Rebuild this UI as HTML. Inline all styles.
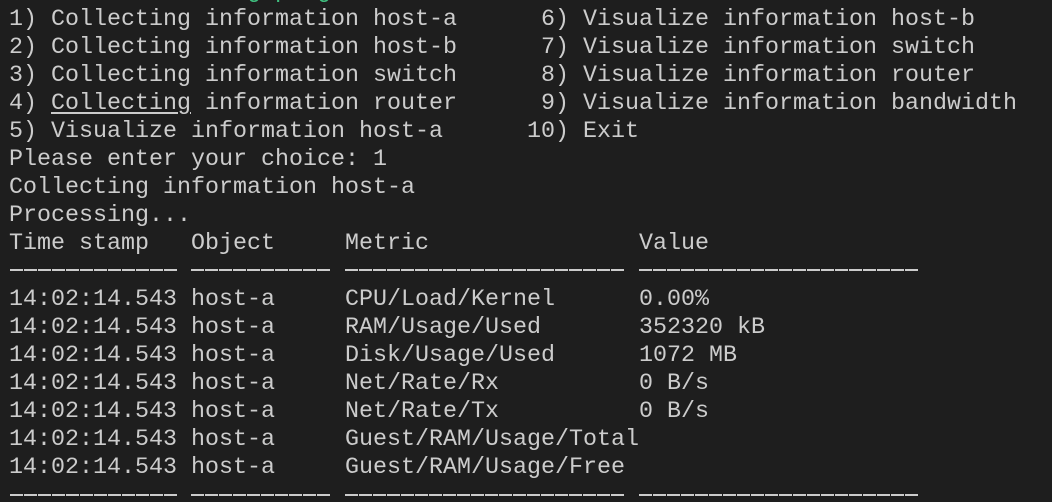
<!DOCTYPE html>
<html><head><meta charset="utf-8"><style>
html,body{margin:0;padding:0;background:#1e1e1e;width:1052px;height:502px;overflow:hidden}
pre{position:absolute;left:9px;top:6px;margin:0;font-family:"Liberation Mono","DejaVu Sans Mono",monospace;font-size:23.33px;line-height:28px;color:#cccccc;white-space:pre}
.u{text-decoration:underline;text-underline-offset:3px}
.d{position:absolute;height:2px;background:repeating-linear-gradient(90deg,#cccccc 0 13px,transparent 13px 14px)}
.g{position:absolute;top:-22px;left:9px;font-family:"Liberation Mono",monospace;font-size:23.33px;line-height:28px;color:#3fbf7f;white-space:pre}
</style></head><body>
<div class="g">                 g p  g</div>
<pre>1) Collecting information host-a      6) Visualize information host-b
2) Collecting information host-b      7) Visualize information switch
3) Collecting information switch      8) Visualize information router
4) <span class="u">Collecting</span> information router      9) Visualize information bandwidth
5) Visualize information host-a      10) Exit
Please enter your choice: 1
Collecting information host-a
Processing...
Time stamp   Object     Metric               Value

14:02:14.543 host-a     CPU/Load/Kernel      0.00%
14:02:14.543 host-a     RAM/Usage/Used       352320 kB
14:02:14.543 host-a     Disk/Usage/Used      1072 MB
14:02:14.543 host-a     Net/Rate/Rx          0 B/s
14:02:14.543 host-a     Net/Rate/Tx          0 B/s
14:02:14.543 host-a     Guest/RAM/Usage/Total
14:02:14.543 host-a     Guest/RAM/Usage/Free
</pre>
<div class="d" style="top:269px;left:10px;width:167px"></div>
<div class="d" style="top:269px;left:191px;width:139px"></div>
<div class="d" style="top:269px;left:345px;width:279px"></div>
<div class="d" style="top:269px;left:639px;width:279px"></div>
<div class="d" style="top:494px;left:10px;width:167px"></div>
<div class="d" style="top:494px;left:191px;width:139px"></div>
<div class="d" style="top:494px;left:345px;width:279px"></div>
<div class="d" style="top:494px;left:639px;width:279px"></div>
</body></html>
